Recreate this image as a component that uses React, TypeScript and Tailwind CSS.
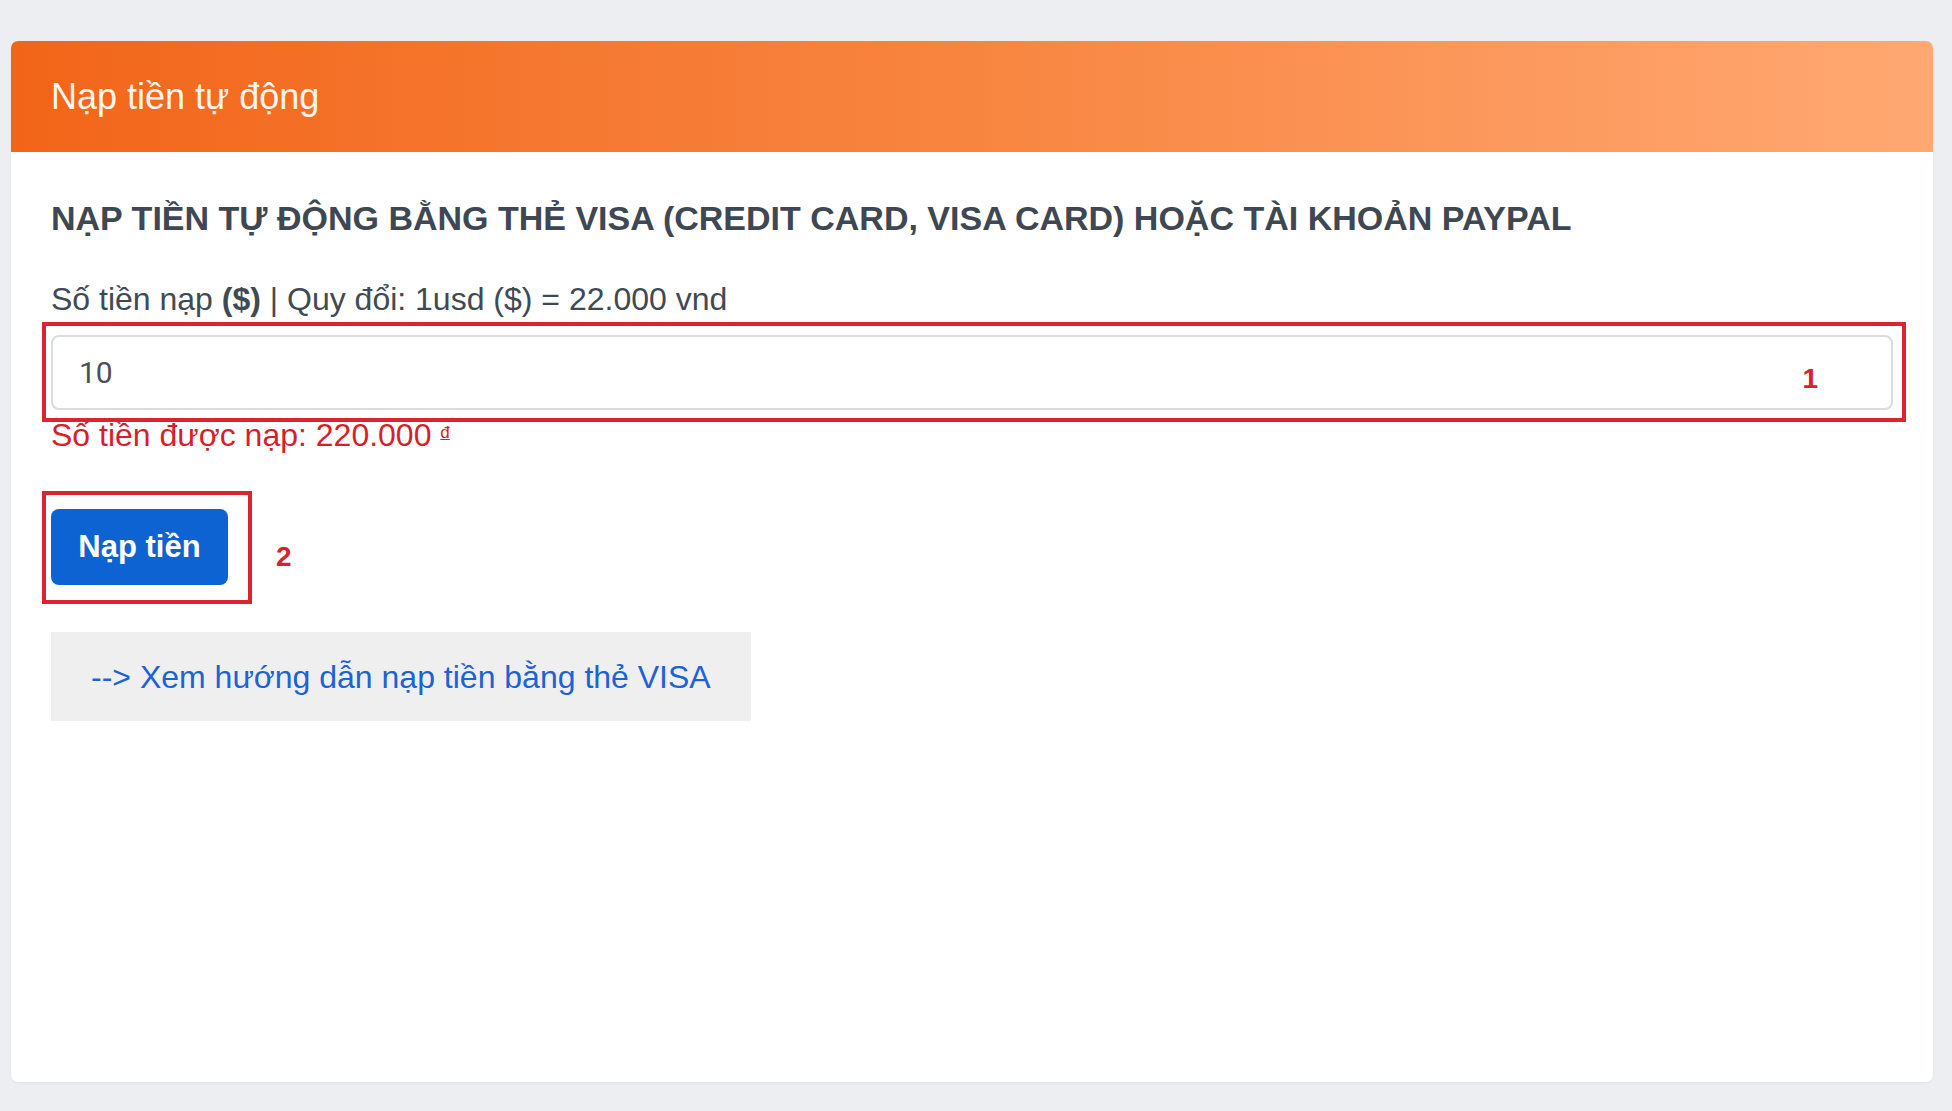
import { useState } from 'react'

function App() {
  const [amount, setAmount] = useState('10')
  const vnd = (Number(amount) || 0) * 22000

  return (
    <div className="min-h-screen bg-[#eceef2] pl-[11px] pr-[19px] pt-[41px] pb-[29px] font-['Liberation_Sans',Arial,sans-serif] text-[#3f4751]">
      <div className="h-[1041px] overflow-hidden rounded-[7px] bg-white shadow-[0_1px_3px_rgba(0,0,0,0.06)]">
        <div className="flex h-[111px] items-center bg-gradient-to-r from-[#f26517] via-[#f8853f] to-[#ffa872] px-10">
          <h2 className="text-[36px] leading-[40px] text-[#fff5ec]">Nạp tiền tự động</h2>
        </div>

        <div className="px-10 pt-[46px]">
          <h3 className="text-[34px] font-bold leading-[40px] text-[#3e4752]">
            NẠP TIỀN TỰ ĐỘNG BẰNG THẺ VISA (CREDIT CARD, VISA CARD) HOẶC TÀI KHOẢN PAYPAL
          </h3>

          <label className="mt-[42px] block text-[32px] leading-[38px] text-[#404a54]">
            Số tiền nạp <b>($)</b> | Quy đổi: 1usd ($) = 22.000 vnd
          </label>

          <div className="relative mt-[17px]">
            <input
              value={amount}
              onChange={(e) => setAmount(e.target.value)}
              className="block h-[75px] w-full rounded-[8px] border-2 border-[#d9dde2] bg-white px-[26px] font-['Roboto',sans-serif] text-[30px] text-[#4a5058] outline-none"
            />
            <div className="pointer-events-none absolute -top-[13px] -bottom-[12px] -left-[9px] -right-[13px] z-10 border-[4px] border-[#dc2430]" />
            <span className="pointer-events-none absolute right-[75px] top-[27px] text-[28px] font-bold leading-[34px] text-[#d8222e]">1</span>
          </div>

          <p className="mt-[8px] text-[32px] leading-[34px] text-[#d81f29]">
            Số tiền được nạp: {vnd.toLocaleString('de-DE')} <sup className="text-[17px] underline">đ</sup>
          </p>

          <div className="relative mt-[57px] inline-block">
            <button className="h-[76px] w-[177px] rounded-[8px] bg-[#0c63d1] text-[31px] font-bold text-white">Nạp tiền</button>
            <div className="pointer-events-none absolute -top-[18px] -bottom-[19px] -left-[9px] -right-[24px] border-[4px] border-[#dc2430]" />
            <span className="pointer-events-none absolute left-[225px] top-[31px] text-[28px] font-bold leading-[34px] text-[#d8222e]">2</span>
          </div>

          <div className="mt-[47px]">
            <a href="#" className="inline-flex h-[89px] items-center bg-[#efefef] px-[40px] text-[32px] text-[#1d62d6]">
              --&gt; Xem hướng dẫn nạp tiền bằng thẻ VISA
            </a>
          </div>
        </div>
      </div>
    </div>
  )
}

export default App
